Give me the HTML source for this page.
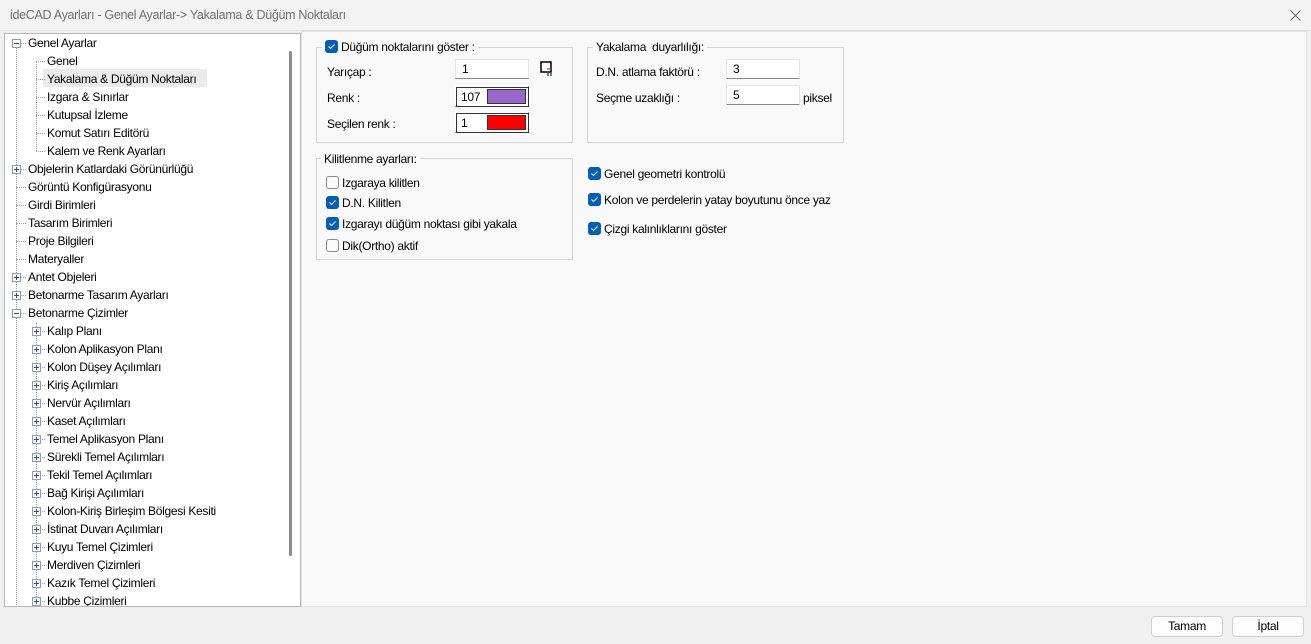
<!DOCTYPE html>
<html><head><meta charset="utf-8"><style>
*{box-sizing:border-box;margin:0;padding:0}
body{width:1311px;height:644px;background:#f0f0f0;font-family:"Liberation Sans","DejaVu Sans",sans-serif;font-size:12px;letter-spacing:-0.3px;color:#000;position:relative;overflow:hidden}
.a{position:absolute;white-space:nowrap}
.title{left:0;top:0;width:1311px;height:31px;background:#f3f3f3;border-bottom:1px solid #e0e0e0}
.tree{left:4px;top:33px;width:297px;height:574px;background:#fff;border:1px solid #b8b8b8;overflow:hidden}
.right{left:301px;top:31px;width:1006px;height:576px;background:#f9f9f9;border:1px solid #e3e3e3}
.grp{border:1px solid #d5d5d5}
.lg{background:#f9f9f9;padding:0 3px}
.inp{background:#fff;border:1px solid #e5e5e5;border-bottom:1px solid #8a8a8a;height:20px;padding:2px 6px}
.cb{width:13px;height:13px;border-radius:3px;background:#005fb8;display:inline-block}
.cb.off{background:#fbfbfb;border:1px solid #8a8a8a}
.cb svg{display:block}
.btn{background:#fdfdfd;border:1px solid #d0d0d0;border-radius:4px;height:21px;text-align:center;line-height:19px}
.ex{width:9px;height:9px;border:1px solid #8a9bb5;background:#fff;position:absolute}
.ex:before{content:"";position:absolute;left:1px;top:3px;width:5px;height:1px;background:#2b50a0}
.ex.p:after{content:"";position:absolute;left:3px;top:1px;width:1px;height:5px;background:#2b50a0}
.cbox{width:74px;height:21px;background:#fff;border:1px solid;border-color:#fff #333 #333 #fff;box-shadow:inset 1px 1px 0 #333}
</style></head><body>
<div class="a title"></div>
<div class="a" style="left:10px;top:8px;color:#707070;font-size:12.5px">ideCAD Ayarları - Genel Ayarlar-&gt; Yakalama &amp; Düğüm Noktaları</div>
<svg class="a" style="left:1290px;top:10px" width="11" height="11"><path d="M0.5 0.5L10.5 10.5M10.5 0.5L0.5 10.5" stroke="#666" stroke-width="1"/></svg>

<div class="a tree">
<div class="a" style="left:11px;top:9px;width:0;height:570px;border-left:1px dotted #a0a0a0"></div>
<div class="a" style="left:31px;top:27px;width:0;height:90px;border-left:1px dotted #a0a0a0"></div>
<div class="a" style="left:31px;top:289px;width:0;height:290px;border-left:1px dotted #a0a0a0"></div>
<div class="a" style="left:38px;top:35px;width:164px;height:18px;background:#ebebeb"></div>
<div class="a" style="left:284px;top:17px;width:3px;height:505px;background:#8a8a8a;border-radius:2px"></div>
<div id="t"></div>
</div>
<script>
var items=[[0,"Genel Ayarlar","m"],[1,"Genel"],[1,"Yakalama & Düğüm Noktaları"],[1,"Izgara & Sınırlar"],[1,"Kutupsal İzleme"],[1,"Komut Satırı Editörü"],[1,"Kalem ve Renk Ayarları"],[0,"Objelerin Katlardaki Görünürlüğü","p"],[0,"Görüntü Konfigürasyonu"],[0,"Girdi Birimleri"],[0,"Tasarım Birimleri"],[0,"Proje Bilgileri"],[0,"Materyaller"],[0,"Antet Objeleri","p"],[0,"Betonarme Tasarım Ayarları","p"],[0,"Betonarme Çizimler","m"],[1,"Kalıp Planı","p"],[1,"Kolon Aplikasyon Planı","p"],[1,"Kolon Düşey Açılımları","p"],[1,"Kiriş Açılımları","p"],[1,"Nervür Açılımları","p"],[1,"Kaset Açılımları","p"],[1,"Temel Aplikasyon Planı","p"],[1,"Sürekli Temel Açılımları","p"],[1,"Tekil Temel Açılımları","p"],[1,"Bağ Kirişi Açılımları","p"],[1,"Kolon-Kiriş Birleşim Bölgesi Kesiti","p"],[1,"İstinat Duvarı Açılımları","p"],[1,"Kuyu Temel Çizimleri","p"],[1,"Merdiven Çizimleri","p"],[1,"Kazık Temel Çizimleri","p"],[1,"Kubbe Çizimleri","p"]];
var h="";items.forEach(function(it,i){var y=9+18*i;var lx=it[0]?31:11;var tx=it[0]?42:23;
h+='<div class="a" style="left:'+lx+'px;top:'+y+'px;width:'+(tx-lx-2)+'px;border-top:1px dotted #a0a0a0"></div>';
if(it[2])h+='<div class="ex '+(it[2]=="p"?"p":"")+'" style="left:'+(lx-4)+'px;top:'+(y-4)+'px"></div>';
h+='<div class="a" style="left:'+tx+'px;top:'+(y-7)+'px">'+it[1].replace(/&/g,"&amp;")+'</div>';});
document.getElementById("t").innerHTML=h;
</script>

<div class="a right"></div>
<div class="a grp" style="left:316px;top:47px;width:257px;height:96px"></div>
<div class="a lg" style="left:322px;top:40px"><span class="cb" style="vertical-align:-2px"><svg width="13" height="13"><path d="M3.5 6.5L5.5 8.5L9.5 4.5" stroke="#fff" fill="none"/></svg></span> Düğüm noktalarını göster :</div>
<div class="a" style="left:327px;top:65px">Yarıçap :</div>
<div class="a inp" style="left:455px;top:59px;width:74px">1</div>
<svg class="a" style="left:540px;top:61px" width="14" height="16"><rect x="1" y="1" width="10" height="10" fill="#fff" stroke="#000" stroke-width="1.5"/><path d="M7 8h4" stroke="#e00"/><path d="M8 12v3M11 12v3" stroke="#000"/></svg>
<div class="a" style="left:327px;top:91px">Renk :</div>
<div class="a cbox" style="left:455px;top:86px"></div>
<div class="a" style="left:458px;top:89px;width:30px;height:16px;padding:1px 3px">107</div>
<div class="a" style="left:487px;top:89px;width:39px;height:15px;background:#9966cc;border:1px solid #333"></div>
<div class="a" style="left:327px;top:117px">Seçilen renk :</div>
<div class="a cbox" style="left:455px;top:112px"></div>
<div class="a" style="left:458px;top:115px;width:30px;height:16px;padding:1px 3px">1</div>
<div class="a" style="left:487px;top:115px;width:39px;height:15px;background:#ff0000;border:1px solid #333"></div>
<div class="a grp" style="left:587px;top:47px;width:257px;height:96px"></div>
<div class="a lg" style="left:593px;top:40px">Yakalama&nbsp; duyarlılığı:</div>
<div class="a" style="left:596px;top:65px">D.N. atlama faktörü :</div>
<div class="a inp" style="left:726px;top:59px;width:74px">3</div>
<div class="a" style="left:596px;top:91px">Seçme uzaklığı :</div>
<div class="a inp" style="left:726px;top:85px;width:74px">5</div>
<div class="a" style="left:803px;top:91px">piksel</div>
<div class="a grp" style="left:316px;top:158px;width:257px;height:102px"></div>
<div class="a lg" style="left:321px;top:152px">Kilitlenme ayarları:</div>
<div id="c"></div>
<script>
var cbs=[[326,176,0,"Izgaraya kilitlen"],[326,196,1,"D.N. Kilitlen"],[326,217,1,"Izgarayı düğüm noktası gibi yakala"],[326,239,0,"Dik(Ortho) aktif"],[588,167,1,"Genel geometri kontrolü"],[588,193,1,"Kolon ve perdelerin yatay boyutunu önce yaz"],[588,222,1,"Çizgi kalınlıklarını göster"]];
var h="";cbs.forEach(function(c){h+='<div class="a" style="left:'+c[0]+'px;top:'+c[1]+'px"><span class="cb'+(c[2]?'':' off')+'" style="vertical-align:-2px">'+(c[2]?'<svg width="13" height="13"><path d="M3.5 6.5L5.5 8.5L9.5 4.5" stroke="#fff" fill="none"/></svg>':'')+'</span> '+c[3]+'</div>';});
document.getElementById("c").innerHTML=h;
</script>
<div class="a btn" style="left:1151px;top:616px;width:72px">Tamam</div>
<div class="a btn" style="left:1232px;top:616px;width:72px">İptal</div>
</body></html>
